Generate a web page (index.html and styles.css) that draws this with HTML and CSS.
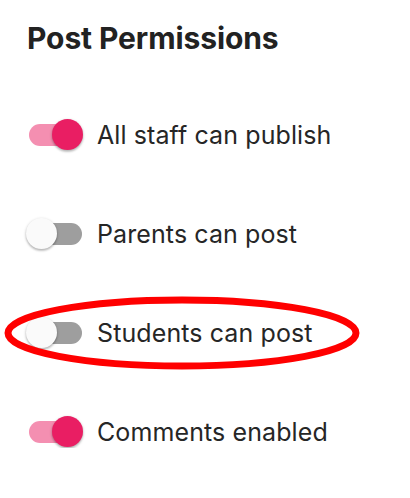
FILE: index.html
```html
<!DOCTYPE html>
<html>
<head>
<meta charset="utf-8">
<link rel="stylesheet" href="styles.css">
</head>
<body>
<div class="panel">
  <h2 class="title">Post Permissions</h2>
  <div class="list">
    <div class="row">
      <span class="switch on"><span class="track"></span><span class="thumb"></span></span>
      <span class="label">All staff can publish</span>
    </div>
    <div class="row">
      <span class="switch"><span class="track"></span><span class="thumb"></span></span>
      <span class="label">Parents can post</span>
    </div>
    <div class="row highlighted">
      <span class="switch"><span class="track"></span><span class="thumb"></span></span>
      <span class="label">Students can post</span>
      <svg class="ring" width="364" height="80" viewBox="0 0 364 80"><ellipse cx="179" cy="39" rx="174" ry="33" fill="none" stroke="#ff0000" stroke-width="7"/></svg>
    </div>
    <div class="row">
      <span class="switch on"><span class="track"></span><span class="thumb"></span></span>
      <span class="label">Comments enabled</span>
    </div>
  </div>
</div>
</body>
</html>
```
FILE: styles.css
```css
html, body {
  margin: 0;
  padding: 0;
  background: #ffffff;
}
.panel {
  padding: 20px 0 0 26px;
  font-family: "Inter", "Roboto", sans-serif;
  color: #212121;
}
.title {
  margin: 0 0 0 1px;
  font-size: 30px;
  line-height: 36px;
  font-weight: 700;
  color: #222222;
  letter-spacing: -0.1px;
}
.list {
  display: flex;
  flex-direction: column;
  gap: 67px;
  margin-top: 63px;
}
.row {
  position: relative;
  display: flex;
  align-items: center;
  height: 32px;
  gap: 14px;
}
.switch {
  position: relative;
  width: 57px;
  height: 32px;
  flex: none;
}
.track {
  position: absolute;
  left: 3px;
  top: 5px;
  width: 53px;
  height: 22px;
  border-radius: 11px;
  background: #9e9e9e;
}
.thumb {
  position: absolute;
  left: 0;
  top: 0;
  width: 31px;
  height: 31px;
  border-radius: 50%;
  background: #fafafa;
  box-shadow: 0 1px 3px rgba(0,0,0,0.25), 0 2px 2px rgba(0,0,0,0.12);
}
.switch.on .track {
  background: #f48fb1;
}
.switch.on .thumb {
  left: 26px;
  background: #e91e63;
}
.label {
  font-size: 25px;
  line-height: 32px;
  color: #262626;
  letter-spacing: 0.1px;
}
.ring {
  position: absolute;
  left: -23px;
  top: -23px;
  pointer-events: none;
}
```
